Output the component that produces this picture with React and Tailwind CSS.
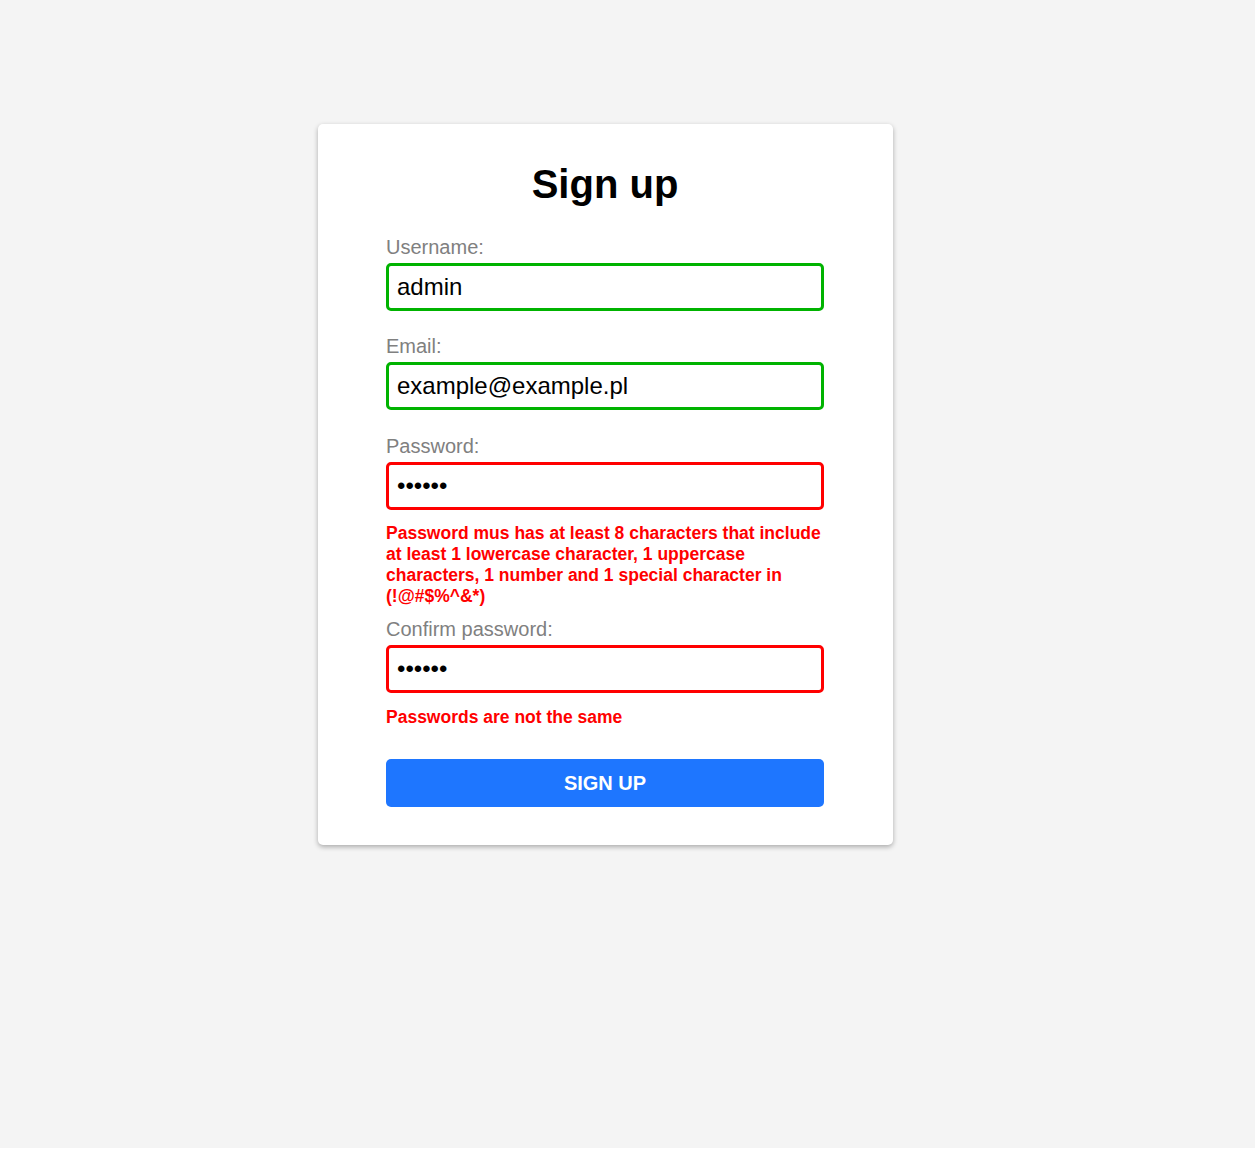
import React from 'react';

const font = { fontFamily: '"Liberation Sans", Arial, sans-serif' };

function Field({ label, type = 'text', value, ok, error, errorGap = 'mt-[13px]' }) {
  return (
    <div>
      <label className="block text-[20px] leading-[23px] text-[#808080]">{label}</label>
      <input
        type={type}
        defaultValue={value}
        className={`mt-[4px] block w-full h-[48px] px-[8px] rounded-[5px] border-[3px] text-[24px] text-black outline-none ${
          ok ? 'border-[#00b300]' : 'border-[#ff0000]'
        }`}
      />
      {error && (
        <p className={`${errorGap} text-[17.5px] leading-[21px] font-bold text-[#ff0000]`}>{error}</p>
      )}
    </div>
  );
}

export default function App() {
  return (
    <div className="min-h-[1148px] bg-[#f4f4f4] pt-[124px] pl-[318px]" style={font}>
      <form
        onSubmit={(e) => e.preventDefault()}
        className="w-[575px] bg-white rounded-[5px] shadow-[0_2px_5px_rgba(0,0,0,0.3)] pl-[68px] pr-[69px] pt-[37px] pb-[38px]"
      >
        <h1 className="text-center text-[40px] leading-[46px] font-bold text-black">Sign up</h1>

        <div className="mt-[29px] flex flex-col">
          <Field label="Username:" value="admin" ok />
          <div className="mt-[24px]">
            <Field label="Email:" value="example@example.pl" ok />
          </div>
          <div className="mt-[25px]">
            <Field
              label="Password:"
              type="password"
              value="123456"
              error="Password mus has at least 8 characters that include at least 1 lowercase character, 1 uppercase characters, 1 number and 1 special character in (!@#$%^&*)"
            />
          </div>
          <div className="mt-[11px]">
            <Field
              label="Confirm password:"
              type="password"
              value="123456"
              errorGap="mt-[14px]"
              error="Passwords are not the same"
            />
          </div>
        </div>

        <button
          type="submit"
          className="mt-[31px] w-full h-[48px] rounded-[5px] bg-[#1e76ff] text-white text-[20px] font-bold uppercase"
        >
          Sign up
        </button>
      </form>
    </div>
  );
}
